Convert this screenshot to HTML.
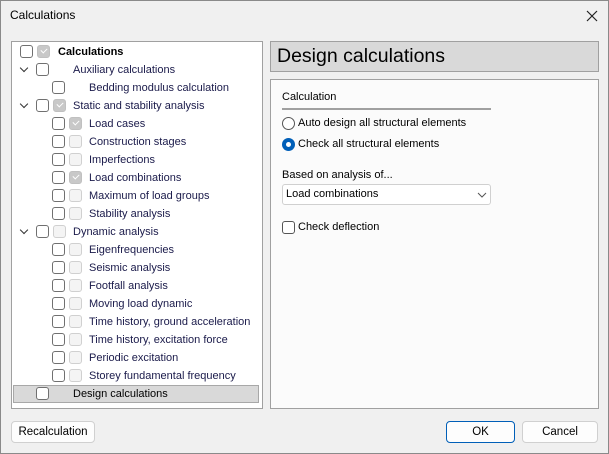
<!DOCTYPE html>
<html><head><style>
*{box-sizing:border-box;margin:0;padding:0}
body{width:609px;height:454px;background:#f0f0f0;font-family:"Liberation Sans",sans-serif;font-size:11px;color:#000;position:relative;overflow:hidden}
.a{position:absolute}
.tree{left:11px;top:41px;width:252px;height:368px;background:#fff;border:1px solid #a0a0a0}
.row{position:absolute;left:0;height:18px;width:100%;color:#1a1a4a;line-height:18px;white-space:nowrap}
.cb{position:absolute;width:13px;height:13px;border:1px solid #707070;border-radius:3px;background:#fff;top:2px}
.cg{position:absolute;width:13px;height:13px;border:1px solid #d0d0d0;border-radius:3px;background:#f4f4f4;top:2px}
.ck{background:#c8c8c8;border-color:#c0c0c0}
.ck::after{content:"";position:absolute;left:3px;top:2px;width:5px;height:3px;border-left:1px solid #fff;border-bottom:1px solid #fff;transform:rotate(-45deg)}
.chev{position:absolute;left:9px;top:4px;width:6px;height:6px;border-right:1.3px solid #333;border-bottom:1.3px solid #333;transform:rotate(45deg)}
.t{position:absolute}
.btn{position:absolute;height:22px;background:#fdfdfd;border:1px solid #d0d0d0;border-radius:4px;text-align:center;line-height:20px;font-size:11.5px}
</style></head><body>
<div class="a" style="left:0;top:0;width:609px;height:454px;border:1px solid #8a8a8a"></div>
<div class="a" style="left:10px;top:8px;font-size:12px">Calculations</div>
<svg class="a" style="left:586px;top:10px" width="12" height="12"><path d="M1 1L11 11M11 1L1 11" stroke="#222" stroke-width="1.2"/></svg>

<div class="a tree">
<div class="row" style="top:1px"><div class="cb" style="left:8px"></div><div class="cg ck" style="left:25px"></div><span class="t" style="left:46px;font-weight:bold;color:#000">Calculations</span></div>
<div class="row" style="top:19px"><div class="chev"></div><div class="cb" style="left:24px"></div><span class="t" style="left:61px">Auxiliary calculations</span></div>
<div class="row" style="top:37px"><div class="cb" style="left:40px"></div><span class="t" style="left:77px">Bedding modulus calculation</span></div>
<div class="row" style="top:55px"><div class="chev"></div><div class="cb" style="left:24px"></div><div class="cg ck" style="left:41px"></div><span class="t" style="left:61px">Static and stability analysis</span></div>
<div class="row" style="top:73px"><div class="cb" style="left:40px"></div><div class="cg ck" style="left:57px"></div><span class="t" style="left:77px">Load cases</span></div>
<div class="row" style="top:91px"><div class="cb" style="left:40px"></div><div class="cg" style="left:57px"></div><span class="t" style="left:77px">Construction stages</span></div>
<div class="row" style="top:109px"><div class="cb" style="left:40px"></div><div class="cg" style="left:57px"></div><span class="t" style="left:77px">Imperfections</span></div>
<div class="row" style="top:127px"><div class="cb" style="left:40px"></div><div class="cg ck" style="left:57px"></div><span class="t" style="left:77px">Load combinations</span></div>
<div class="row" style="top:145px"><div class="cb" style="left:40px"></div><div class="cg" style="left:57px"></div><span class="t" style="left:77px">Maximum of load groups</span></div>
<div class="row" style="top:163px"><div class="cb" style="left:40px"></div><div class="cg" style="left:57px"></div><span class="t" style="left:77px">Stability analysis</span></div>
<div class="row" style="top:181px"><div class="chev"></div><div class="cb" style="left:24px"></div><div class="cg" style="left:41px"></div><span class="t" style="left:61px">Dynamic analysis</span></div>
<div class="row" style="top:199px"><div class="cb" style="left:40px"></div><div class="cg" style="left:57px"></div><span class="t" style="left:77px">Eigenfrequencies</span></div>
<div class="row" style="top:217px"><div class="cb" style="left:40px"></div><div class="cg" style="left:57px"></div><span class="t" style="left:77px">Seismic analysis</span></div>
<div class="row" style="top:235px"><div class="cb" style="left:40px"></div><div class="cg" style="left:57px"></div><span class="t" style="left:77px">Footfall analysis</span></div>
<div class="row" style="top:253px"><div class="cb" style="left:40px"></div><div class="cg" style="left:57px"></div><span class="t" style="left:77px">Moving load dynamic</span></div>
<div class="row" style="top:271px"><div class="cb" style="left:40px"></div><div class="cg" style="left:57px"></div><span class="t" style="left:77px">Time history, ground acceleration</span></div>
<div class="row" style="top:289px"><div class="cb" style="left:40px"></div><div class="cg" style="left:57px"></div><span class="t" style="left:77px">Time history, excitation force</span></div>
<div class="row" style="top:307px"><div class="cb" style="left:40px"></div><div class="cg" style="left:57px"></div><span class="t" style="left:77px">Periodic excitation</span></div>
<div class="row" style="top:325px"><div class="cb" style="left:40px"></div><div class="cg" style="left:57px"></div><span class="t" style="left:77px">Storey fundamental frequency</span></div>
<div class="row" style="top:343px;left:1px;width:246px;background:#d9d9d9;border:1px solid #a8a8a8;line-height:16px"><div class="cb" style="left:22px;top:1px"></div><span class="t" style="left:59px;color:#000">Design calculations</span></div>
</div>

<div class="a" style="left:270px;top:41px;width:329px;height:31px;background:#d9d9d9;border:1px solid #a0a0a0;font-size:19.5px;line-height:28px;padding-left:6px">Design calculations</div>
<div class="a" style="left:270px;top:79px;width:329px;height:330px;background:#fbfbfb;border:1px solid #a0a0a0"></div>
<div class="a" style="left:282px;top:91px">Calculation</div>
<div class="a" style="left:282px;top:108px;width:209px;height:2px;background:#a0a0a0"></div>
<div class="a" style="left:282px;top:117px;width:13px;height:13px;border:1px solid #555;border-radius:50%;background:#fff"></div>
<div class="a" style="left:298px;top:117px">Auto design all structural elements</div>
<div class="a" style="left:282px;top:138px;width:13px;height:13px;border-radius:50%;background:#005fb8"><div class="a" style="left:4px;top:4px;width:5px;height:5px;border-radius:50%;background:#fff"></div></div>
<div class="a" style="left:298px;top:138px">Check all structural elements</div>
<div class="a" style="left:282px;top:169px">Based on analysis of...</div>
<div class="a" style="left:282px;top:184px;width:209px;height:21px;background:#fff;border:1px solid #d0d0d0;border-radius:3px;padding-left:3px;line-height:19px">Load combinations
<svg class="a" style="left:194px;top:7px" width="10" height="6"><path d="M1 1L5 5L9 1" stroke="#555" fill="none"/></svg></div>
<div class="a" style="left:282px;top:221px;width:13px;height:13px;border:1px solid #555;border-radius:3px;background:#fff"></div>
<div class="a" style="left:298px;top:221px">Check deflection</div>

<div class="btn" style="left:11px;top:421px;width:84px">Recalculation</div>
<div class="btn" style="left:446px;top:421px;width:69px;border-color:#005fb8">OK</div>
<div class="btn" style="left:522px;top:421px;width:76px">Cancel</div>
</body></html>
